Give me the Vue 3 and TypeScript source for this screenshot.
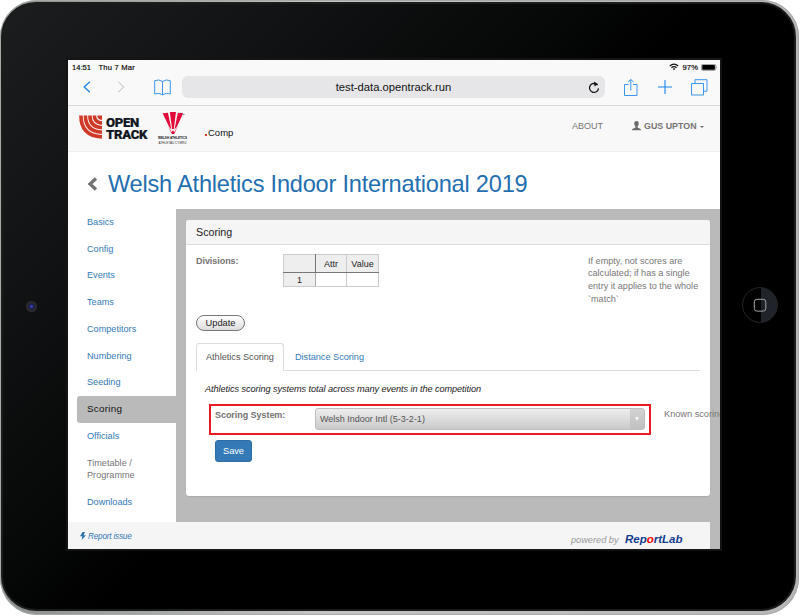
<script setup lang="ts">
interface NavItem {
  label: string
  state?: 'active' | 'muted'
}

const items: NavItem[] = [
  { label: 'Basics' },
  { label: 'Config' },
  { label: 'Events' },
  { label: 'Teams' },
  { label: 'Competitors' },
  { label: 'Numbering' },
  { label: 'Seeding' },
  { label: 'Scoring', state: 'active' },
  { label: 'Officials' },
  { label: 'Timetable / Programme', state: 'muted' },
  { label: 'Downloads' },
]
</script>

<template>
  <div class="device">
    <div class="bezel">
      <div class="side left"><i class="camera"></i></div>
      <div class="screen">
        <div class="status">
          <span class="time">14:51</span>
          <span class="date">Thu 7 Mar</span>
          <svg class="wifi" width="10" height="8" viewBox="0 0 10 8" fill="none" stroke="#111" stroke-width="1.2">
            <path d="M.8 3Q5-.8 9.200 3M2.400 4.700Q5 2.400 7.600 4.700" />
            <path d="M5 7.200 3.700 5.800Q5 4.800 6.300 5.800Z" fill="#111" stroke="none" />
          </svg>
          <span class="pct">97%</span>
          <svg class="battery" width="17" height="7" viewBox="0 0 17 7">
            <rect x=".4" y=".4" width="14.400" height="6" rx="1.400" fill="none" stroke="#777" stroke-width=".7" />
            <rect x="1.200" y="1.100" width="12.700" height="4.600" rx=".6" fill="#000" />
            <path d="M15.600 2.200q1.200 1.200 0 2.400z" fill="#555" />
          </svg>
        </div>

        <div class="toolbar">
          <svg class="back" width="8" height="12" viewBox="0 0 8 12"><path d="M6.800.8 1.200 6l5.600 5.200" fill="none" stroke="#1b86f2" stroke-width="1.300" /></svg>
          <svg class="fwd" width="8" height="12" viewBox="0 0 8 12"><path d="M1.200.8 6.800 6l-5.600 5.200" fill="none" stroke="#d2d2d4" stroke-width="1.200" /></svg>
          <svg class="book" width="17" height="17" viewBox="0 0 17 17" fill="none" stroke="#3a95f3">
            <path d="M8.500 2.500Q5-.2.7 1.700V15q4.300-1.700 7.800.8 3.500-2.500 7.800-.8V1.700Q12-.2 8.500 2.500ZM8.500 2.500V15.800" />
          </svg>
          <div class="url">
            <span>test-data.opentrack.run</span>
            <svg width="12" height="13" viewBox="0 0 12 13"><path d="M9.600 4.200A4.500 4.500 0 1 0 10.500 7.400" fill="none" stroke="#111" stroke-width="1.200" /><path d="M5.900.6 9.800 3.100 6.600 5.500z" fill="#111" /></svg>
          </div>
          <svg class="share" width="14" height="19" viewBox="0 0 14 19" fill="none" stroke="#3a95f3">
            <path d="M4.500 6.500h-4v11h12.500v-11H9M6.800 12.500V1.500M4 4.200 6.800 1.400 9.600 4.200" />
          </svg>
          <svg class="plus" width="14" height="14" viewBox="0 0 14 14"><path d="M7 0v14M0 7h14" stroke="#1b86f2" stroke-width="1.100" /></svg>
          <svg class="tabsicon" width="17" height="17" viewBox="0 0 17 17" fill="none" stroke="#3a95f3"><path d="M.5 4.500h12v11.500H.5zM4 4.500V.7h12v11.500h-3.500" /></svg>
        </div>

        <header class="sitebar">
          <svg class="arcs" width="24" height="24" viewBox="0 0 24 24" fill="none" stroke="#cf3a28" stroke-width="3.600">
            <path d="M1.900.5Q1.900 21 23 21.900M6.400.5Q6.400 16.500 23 17.300M10.900.5Q10.900 12 23 12.700M15.400.5Q15.400 7.600 23 8.100" />
            <path d="M18.300.5H23V5Q18.300 4.700 18.300.5Z" fill="#cf3a28" stroke="none" />
          </svg>
          <div class="wordmark"><span>OPEN</span><span>TRACK</span></div>
          <div class="welsh">
            <svg width="24" height="22" viewBox="0 0 24 22" fill="#e20c3b">
              <path d="M8.800 0h6.200L12.800 17h-1.700zM1.600 1.300 7 .7 10.400 17.500 8 14.500zM16.800.7l5.400.6L16 14.500l-2.500 3zM6.800 13l3.800 7 1.400-1.500 1.400 1.500L17.200 13 13.200 22h-2.400z" />
              <circle cx="22.900" cy="2.500" r=".6" fill="#333" />
            </svg>
            <span class="wa1">WELSH ATHLETICS</span>
            <span class="wa2">ATHLETAU CYMRU</span>
          </div>
          <span class="comp"><b></b>Comp</span>
          <span class="about">ABOUT</span>
          <svg class="user" width="9" height="10" viewBox="0 0 9 10" fill="#6d6d6d"><path d="M4.500 0C6.200 0 7 1.300 6.700 3 6.600 4.300 6 5 5.600 5.500v1.100L8.600 8q.4.400.4 1.300H0Q0 8.400.4 8l3-1.400V5.500C2.900 5 2.400 4.300 2.300 3 2 1.300 2.800 0 4.500 0Z" /></svg>
          <span class="username">GUS UPTON</span>
          <i class="caret"></i>
        </header>

        <div class="heading">
          <svg width="11" height="14" viewBox="0 0 11 14"><path d="M9 1.500 3 7l6 5.500" fill="none" stroke="#737373" stroke-width="3.300" /></svg>
          <h1>Welsh Athletics Indoor International 2019</h1>
        </div>

        <div class="body">
          <nav class="sidebar">
            <a v-for="item in items" :key="item.label" :class="item.state">{{ item.label }}</a>
          </nav>
          <main class="content">
            <section class="panel">
              <div class="panelhead">Scoring</div>
              <div class="divisions">
                <label>Divisions:</label>
                <table>
                  <thead><tr><th class="corner"></th><th class="attr">Attr</th><th>Value</th></tr></thead>
                  <tbody><tr><th class="corner">1</th><td></td><td></td></tr></tbody>
                </table>
                <p class="help"><span>If empty, not scores are</span><span>calculated; if has a single</span><span>entry it applies to the whole</span><span>`match`</span></p>
              </div>
              <button class="update">Update</button>
              <div class="tabs">
                <span class="tab on">Athletics Scoring</span>
                <span class="tab">Distance Scoring</span>
              </div>
              <p class="intro">Athletics scoring systems total across many events in the competition</p>
              <div class="systemrow">
                <div class="highlight">
                  <label>Scoring System:</label>
                  <div class="select"><span>Welsh Indoor Intl (5-3-2-1)</span><div class="drop"><i></i></div></div>
                </div>
                <span class="known">Known scoring</span>
              </div>
              <button class="save">Save</button>
            </section>
          </main>
        </div>

        <footer class="footer">
          <svg width="6" height="8" viewBox="0 0 6 8" fill="#2a72ae"><path d="M2.600 0 0 4.300h2.300L1.700 8 6 3.200H3.600L4.900 0z" /></svg>
          <a class="report">Report issue</a>
          <span class="powered">powered by</span>
          <span class="brand">Rep<b>o</b>rtLab</span>
        </footer>
      </div>
      <div class="side right">
        <svg width="36" height="36" viewBox="0 0 36 36" fill="none">
          <path d="M19 .8A17.300 17.300 0 0 1 19 35.300Z" fill="#20242a" />
          <circle cx="18" cy="18" r="17.400" stroke="#34363a" stroke-width=".7" />
          <rect x="12.300" y="12.300" width="11.500" height="11.800" rx="2.600" stroke="#a2a4a6" stroke-width="1" />
        </svg>
      </div>
    </div>
  </div>
</template>

<style>
body { background: #fff; overflow: hidden; }
</style>

<style scoped>
* { box-sizing: border-box; }
.device { width: 799px; height: 615px; padding: 2px 3px 4px 1px; border-radius: 37px; background: linear-gradient(90deg, #8a8e8c, #c4c4c4 40%, #b8b6b6); box-shadow: inset 0 0 0 1px #a5aaa7; font-family: "Liberation Sans", Arial, sans-serif; font-size: 9.400px; color: #333; overflow: hidden; }
.bezel { width: 795px; height: 609px; border: 2px solid #1c1c1d; border-radius: 35px; padding-top: 56px; background: linear-gradient(135deg, #1b1d1e 0, #121314 20%, #050606 43%, #000 50%); display: flex; align-items: flex-start; }
.side { height: 489px; display: flex; align-items: center; flex: none; }
.left { width: 65px; padding-left: 23px; }
.right { width: 74px; padding-left: 22px; }
.camera { width: 11px; height: 11px; border-radius: 50%; background: radial-gradient(circle, #3740a8 0 12%, #171b55 28%, #29292b 48%, #303133 100%); margin-top: 4px; }
.right svg { margin-top: 1px; }
.screen { width: 652px; height: 489px; flex: none; background: #fff; overflow: hidden; box-shadow: 0 0 0 2px #131415; display: flex; flex-direction: column; }
.status { height: 14px; flex: none; background: #f9f9f9; display: flex; align-items: center; padding: 0 2px 0 4px; font-size: 7.600px; color: #000; white-space: nowrap; }
.time { width: 26.500px; }
.date { width: 86px; letter-spacing: .2px; }
.time, .date, .pct { -webkit-text-stroke: .15px #000; }
.wifi { margin-left: auto; margin-right: 4px; }
.pct { width: 18.500px; letter-spacing: .15px; }
.toolbar { height: 32px; flex: none; background: #f9f9f9; border-bottom: 1px solid #d8d8d8; display: flex; align-items: center; padding: 0 0 5px 15px; }
.toolbar > * { flex: none; }
.fwd { margin-left: 26px; }
.book { margin-left: 29px; }
.url { width: 423px; height: 22px; margin-left: 11px; border-radius: 6px; background: #e6e6e8; display: flex; align-items: center; justify-content: center; position: relative; font-size: 11.250px; color: #111; }
.url svg { position: absolute; right: 5px; top: 5px; }
.share { margin-left: 19px; }
.plus { margin-left: 20px; }
.tabsicon { margin-left: 19px; }
.sitebar { height: 46px; flex: none; background: #f8f8f8; border-bottom: 1px solid #eee; display: flex; align-items: flex-start; padding-left: 11px; white-space: nowrap; color: #747474; }
.sitebar > * { flex: none; }
.arcs { margin-top: 9px; }
.wordmark { width: 52px; margin-left: 3px; margin-top: 11px; display: flex; flex-direction: column; font: 900 13.200px/11.500px Roboto, "Liberation Sans", sans-serif; color: #121722; letter-spacing: -.35px; -webkit-text-stroke: .2px #121722; }
.wordmark span { width: 44px; }
.welsh { width: 30px; margin-left: -.5px; display: flex; flex-direction: column; align-items: center; padding-top: 6px; }
.welsh svg { flex: none; }
.wa1 { font-size: 3.100px; line-height: 3.500px; font-weight: bold; color: #111; margin-top: 3px; }
.wa2 { font-size: 3.100px; line-height: 4px; color: #333; }
.comp { width: 60px; margin: 21px 0 0 17.500px; font-size: 9.500px; line-height: 12px; color: #111; }
.comp b { display: inline-block; width: 2px; height: 2px; margin-right: 1px; background: #d23a26; }
.about { margin: 14.500px 0 0 307px; width: 60px; font-size: 9px; line-height: 11px; }
.user { margin-top: 15px; }
.username { margin: 15px 0 0 3px; width: 54px; font-size: 8.900px; line-height: 11px; font-weight: bold; }
.caret { border: 2.500px solid transparent; border-top-color: #666; margin: 20px 0 0 2px; }
.heading { height: 57px; flex: none; display: flex; align-items: center; padding: 7px 0 0 19px; }
.heading h1 { margin: -1px 0 0 10px; font-size: 23.600px; line-height: 28px; font-weight: normal; letter-spacing: -.22px; color: #236faf; white-space: nowrap; }
.body { height: 313px; flex: none; display: flex; }
.sidebar { width: 108px; flex: none; display: flex; flex-direction: column; padding-left: 9px; }
.sidebar a { padding: 7px 10px; line-height: 12.730px; font-size: 9.150px; color: #337ab7; }
.sidebar .active { background: #bababa; color: #111; font-size: 9.900px; letter-spacing: .25px; border-radius: 3px 0 0 3px; }
.sidebar .muted { color: #777; padding-right: 20px; }
.content { flex: 1; min-width: 0; background: #bababa; padding: 11px 10px 0 10px; }
.panel { width: 524px; height: 276px; background: #fff; border-radius: 3px; box-shadow: 0 1px 1px #aaa; }
.panelhead { height: 25px; background: #f5f5f5; border-bottom: 1px solid #ddd; border-radius: 3px 3px 0 0; padding: 6px 10px; font-size: 10.700px; line-height: 13px; color: #222; }
.divisions { height: 70px; padding: 9px 11px 0 10px; display: flex; align-items: flex-start; color: #666; }
label { font-weight: bold; font-size: 9px; line-height: 13px; color: #727272; white-space: nowrap; letter-spacing: -.05px; }
.divisions label { width: 87px; flex: none; margin-top: .5px; }
table { width: 96px; border-collapse: collapse; table-layout: fixed; color: #222; }
table th, table td { border: 1px solid #ccc; padding: 0; font-weight: normal; font-size: 9px; height: 14px; text-align: center; }
thead th { height: 18px; background: #eee; border-bottom-color: #777; }
th.corner { width: 32px; background: #eee; border-right-color: #aaa; }
thead th.corner { border-right-color: #777; }
th.attr { width: 31px; }
.help { margin: 0 0 0 auto; width: 111px; display: flex; flex-direction: column; line-height: 12.800px; font-size: 9.100px; color: #777; white-space: nowrap; padding-top: .5px; }
button { font-family: inherit; cursor: pointer; padding: 0; display: block; }
.update { width: 49px; height: 16px; margin: 0 0 0 10px; border: 1px solid #777; border-radius: 9px; background: linear-gradient(#fff, #ddd); font-size: 9.300px; line-height: 12px; color: #222; }
.tabs { height: 28px; margin: 12px 10px 0; border-bottom: 1px solid #ddd; display: flex; }
.tab { height: 28px; padding: 8px 11px; line-height: 12px; font-size: 9.200px; letter-spacing: -.03px; color: #337ab7; white-space: nowrap; }
.tab.on { width: 88px; padding: 7px 9px; border: 1px solid #ddd; border-bottom: 0; border-radius: 3px 3px 0 0; background: #fff; color: #555; }
.intro { margin: 12px 0 0 19px; line-height: 13px; font-size: 9.200px; letter-spacing: -.085px; font-style: italic; white-space: nowrap; color: #222; }
.systemrow { margin: 8px 0 0 23px; display: flex; width: 511px; overflow: hidden; }
.highlight { width: 442px; height: 31px; flex: none; border: 2px solid #ea1a20; display: flex; padding: 2px 4px 0; }
.highlight label { width: 100px; margin-top: 1px; }
.select { width: 330px; height: 22px; border: 1px solid #bdbdbd; border-radius: 3px; background: linear-gradient(#eee, #cacaca); display: flex; align-items: center; font-size: 9px; color: #555; padding-left: 4px; flex: none; }
.drop { margin-left: auto; width: 14px; height: 20px; background: linear-gradient(#d2d2d2, #c0c0c0); display: flex; justify-content: center; padding-top: 8px; }
.drop i { width: 0; height: 0; border: 2.500px solid transparent; border-top: 4px solid #f5f5f5; border-bottom: 0; }
.known { flex: none; margin: 4px 0 0 13px; font-size: 9.250px; line-height: 13px; color: #777; white-space: nowrap; letter-spacing: -.03px; }
.save { width: 37px; height: 22px; margin: 5px 0 0 29px; border: 1px solid #2e6da4; border-radius: 3px; background: #337ab7; color: #fff; font-size: 9.200px; }
.footer { width: 642px; height: 27px; flex: none; background: #f5f5f5; box-shadow: 10px 0 0 #bababa; display: flex; align-items: flex-start; padding-left: 12px; white-space: nowrap; font-style: italic; }
.footer > * { flex: none; }
.footer svg { margin-top: 10px; }
.report { margin: 8px 0 0 2px; font-size: 8.200px; letter-spacing: -.2px; line-height: 13px; color: #337ab7; width: 483px; }
.powered { margin-top: 12px; font-size: 9.200px; line-height: 12px; color: #999; width: 54px; }
.brand { margin-top: 10px; font-size: 11.500px; line-height: 14px; font-weight: bold; color: #143d91; letter-spacing: 0; }
.brand b { color: #f00; }
</style>
